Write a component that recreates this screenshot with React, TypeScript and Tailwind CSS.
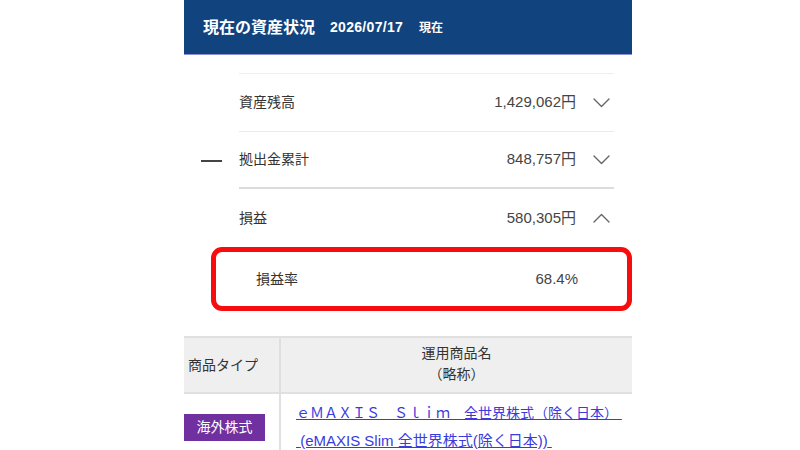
import React from "react";

const font = {
  fontFamily: '"Liberation Sans", "Noto Sans CJK JP", sans-serif',
};

const Chevron = ({ up = false }: { up?: boolean }) => (
  <svg width="17" height="10" viewBox="0 0 17 10" className="shrink-0">
    <path
      d={up ? "M1 9 L8.5 1.5 L16 9" : "M1 1 L8.5 8.5 L16 1"}
      fill="none"
      stroke="#666"
      strokeWidth="1.4"
      strokeLinecap="round"
      strokeLinejoin="round"
    />
  </svg>
);

interface RowProps {
  label: string;
  value: string;
  up?: boolean;
  minus?: boolean;
  border?: string;
  height: string;
}

const SummaryRow = ({ label, value, up, minus, border, height }: RowProps) => (
  <div className="flex">
    <div className="w-[55px] flex items-center justify-start pl-[17px]">
      {minus && <div className="w-[21px] h-[2px] bg-[#444]" />}
    </div>
    <div className={`w-[375px] flex items-center ${height} ${border ?? ""}`}>
      <span className="text-[14px] text-[#333]">{label}</span>
      <span className="ml-auto text-[15px] text-[#444]">{value}</span>
      <div className="ml-[17px] mr-[4px]">
        <Chevron up={up} />
      </div>
    </div>
  </div>
);

export default function App() {
  return (
    <div className="w-[800px] h-[450px] bg-white overflow-hidden" style={font}>
      <div className="ml-[184px] w-[448px]">
        {/* header */}
        <div className="h-[55px] bg-[#11437f] border-b border-[#8c8fd6] flex items-center pl-[19px] pt-[1px] text-white">
          <span className="text-[16px] font-bold">現在の資産状況</span>
          <span className="ml-[15px] text-[14px] font-bold tracking-[0.3px]">2026/07/17</span>
          <span className="ml-[16px] text-[12px] font-bold">現在</span>
        </div>

        <div className="mt-[18px]">
          <div className="ml-[55px] w-[375px] h-px bg-[#eeeeee]" />
          <SummaryRow
            label="資産残高"
            value="1,429,062円"
            height="h-[58px]"
            border="border-b border-[#eaeaea]"
          />
          <SummaryRow
            label="拠出金累計"
            value="848,757円"
            minus
            height="h-[57px]"
            border="border-b-2 border-[#dcdcdc]"
          />
          <SummaryRow label="損益" value="580,305円" up height="h-[58px]" />
        </div>

        {/* highlighted sub row */}
        <div className="ml-[27px] w-[421px] h-[64px] border-[5px] border-[#f70d0d] rounded-[11px] flex items-center pl-[40px] pr-[49px]">
          <span className="text-[14px] text-[#333]">損益率</span>
          <span className="ml-auto text-[15px] text-[#444]">68.4%</span>
        </div>

        {/* table */}
        <div className="mt-[25px] border-t-2 border-[#e0e0e0]">
          <div className="flex h-[56px] bg-[#efefef] border-b-2 border-[#e0e0e0]">
            <div className="w-[95px] flex items-center pl-[4px] text-[14px] text-[#333]">
              商品タイプ
            </div>
            <div className="w-[2px] bg-[#e0e0e0]" />
            <div className="flex-1 flex flex-col items-center justify-center pb-[2px] text-[14px] text-[#333] leading-[21px]">
              <span>運用商品名</span>
              <span>（略称）</span>
            </div>
          </div>
          <div className="flex h-[60px]">
            <div className="w-[95px] pt-[20px]">
              <div className="w-[81px] h-[27px] bg-[#7030a0] text-white text-[14px] flex items-center justify-center">
                海外株式
              </div>
            </div>
            <div className="w-[2px] bg-[#e0e0e0]" />
            <div className="pl-[15px] pt-[6px] leading-[27px] text-[#3b3bdb] whitespace-pre">
              <div className="text-[14px]">
                <span className="underline">ｅＭＡＸＩＳ　Ｓｌｉｍ　全世界株式（除く日本）{"\u00a0"}</span>
              </div>
              <div className="text-[15px]">
                <span className="underline">{"\u00a0"}(eMAXIS Slim 全世界株式(除く日本)){"\u00a0"}</span>
              </div>
            </div>
          </div>
        </div>
      </div>
    </div>
  );
}
